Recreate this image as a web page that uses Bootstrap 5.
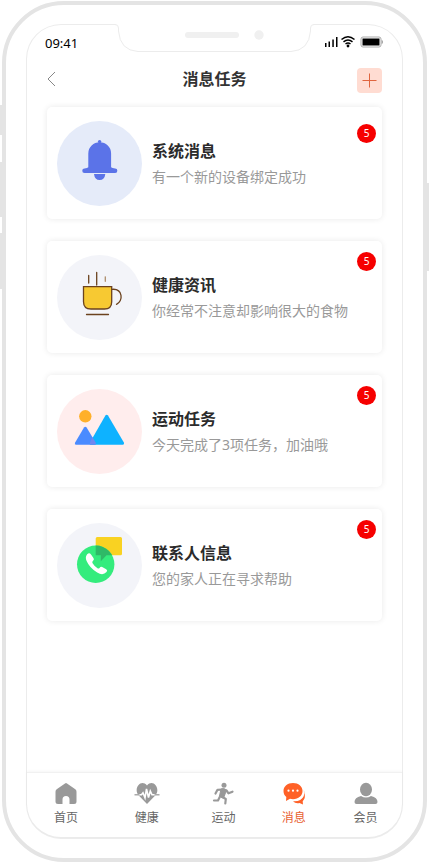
<!DOCTYPE html>
<html lang="zh-CN">
<head>
<meta charset="utf-8">
<meta name="viewport" content="width=device-width, initial-scale=1">
<title>消息任务</title>
<link href="https://cdn.jsdelivr.net/npm/bootstrap@5.3.0/dist/css/bootstrap.min.css" rel="stylesheet">
<style>
  body { font-family: "Noto Sans", "Noto Sans CJK SC", sans-serif; background: #fff; color: #333; }
  svg { display: block; }
  .device { margin: 1px 2px 0; padding: 19px 20px; min-height: calc(100vh - 1px); border: 4px solid #e4e4e4; border-radius: 62px; }
  .side-key { position: absolute; width: 2px; left: -6px; background: #e4e4e4; }
  .key-mute { top: 100px; height: 30px; }
  .key-up { top: 157px; height: 55px; }
  .key-down { top: 228px; height: 56px; }
  .key-power { left: auto; right: -6px; top: 178px; height: 88px; }
  .screen { border: 1px solid #ececec; border-bottom-width: 2px; border-radius: 35px; }
  .notch { position: absolute; top: -2px; left: 50%; margin-left: -100px; }
  .status { padding: 7px 18px 0 18px; height: 36px; font-size: 13px; line-height: 22px; color: #000; }
  .topbar { padding: 7px 20px 14px; }
  .topbar h1 { font-size: 16px; line-height: 22px; padding-bottom: 3px; }
  .back { width: 25px; height: 25px; }
  .add { width: 25px; height: 25px; border-radius: 4px; background: #ffdcd2; }
  .messages { padding: 0 20px; gap: 22px; }
  .message { min-height: 112px; padding: 13px 10px; gap: 10px; border-radius: 5px; background: #fff; box-shadow: 0 0 6px rgba(0,0,0,.09); }
  .message h2 { font-size: 16px; line-height: 25px; color: #2b2b2b; }
  .message p { font-size: 14px; line-height: 25px; color: #999; }
  .message div { padding-top: 2px; }
  .count { position: absolute; top: 11px; right: 6px; width: 19px; height: 19px; font-size: 10px; line-height: 19px; background: #f60000; }
  .count-system { top: 17px; }
  .tabs { display: grid; grid-template-columns: 78fr 84fr 70fr 71fr 73fr; padding: 9px 0; border-top: 1px solid #f1f1f1; box-shadow: 0 -1px 3px rgba(0,0,0,.04); border-radius: 0 0 34px 34px; }
  .tabs a { font-size: 12px; line-height: 20px; color: #666; gap: 3px; }
  .tabs svg { fill: #999; }
  .tabs a.active { color: #e8602f; }
  .tabs .active svg { fill: #ff6127; }
</style>
<script src="https://cdn.jsdelivr.net/npm/bootstrap@5.3.0/dist/js/bootstrap.bundle.min.js"></script>
</head>
<body>
<div class="device position-relative d-flex flex-column">
  <span class="side-key key-mute"></span><span class="side-key key-up"></span><span class="side-key key-down"></span><span class="side-key key-power"></span>
  <div class="screen position-relative d-flex flex-column flex-grow-1">
    <svg class="notch" width="200" height="31" viewBox="0 0 200 31" aria-hidden="true">
      <path d="M0 0H199V1.500Q195.500 1.500 195.500 5V8Q194 28.500 176 28.500H23Q3 26 3 8V5Q3 1.500 0 1.500Z" fill="#fff"/>
      <path d="M0 1.500Q3.500 1.500 3.500 5V8Q5 27.500 23 28.500H176Q194 27.500 195.500 8V5Q195.500 1.500 199 1.500" fill="none" stroke="#ececec"/>
      <rect x="70" y="9" width="54" height="6" rx="3" fill="#f0f0f0"/><circle cx="144" cy="12" r="4.700" fill="#f0f0f0"/>
    </svg>
    <div class="status d-flex justify-content-between">
      <span>09:41</span>
      <svg width="60" height="20" viewBox="0 0 60 20" aria-label="信号 无线网络 电池">
        <path d="M1 11h1.500v4H1zM4.500 9.500H6V15H4.500zM8.300 7.500h1.500V15H8.300zM12 5h1.500v10H12z"/>
        <g fill="none" stroke="#000" stroke-width="1.500"><path d="M17.500 7.500Q24 2 30.500 7.500M19.500 9.800Q24 6.200 28.500 9.800M21.500 12Q24 10 26.500 12"/></g>
        <circle cx="24" cy="14" r="1.400"/>
        <rect x="37" y="5" width="20" height="10" rx="2" fill="#fff" stroke="#aaa"/><rect x="38.500" y="6.500" width="17" height="7"/><path d="M58 8.500q1.500 1.500 0 3z" fill="#aaa" stroke="#aaa"/>
      </svg>
    </div>
    <header class="topbar d-flex align-items-center justify-content-between">
      <button type="button" class="back btn p-0 border-0" aria-label="返回"><svg width="9" height="20" viewBox="0 0 9 20"><path d="M8 1L1 8l7 7" fill="none" stroke="#888"/></svg></button>
      <h1 class="fw-bold mb-0">消息任务</h1>
      <button type="button" class="add btn p-0 border-0" aria-label="添加"><svg width="25" height="25" viewBox="0 0 25 25"><path d="M12.500 5.500v14M5.500 12.500h14" stroke="#e0653f"/></svg></button>
    </header>
    <main class="messages d-flex flex-column flex-grow-1">
      <article class="message position-relative d-flex align-items-center">
        <svg class="flex-shrink-0" width="85" height="85" viewBox="0 0 85 85" aria-hidden="true"><circle cx="42.500" cy="42.500" r="42.500" fill="#e5ebf9"/><g fill="#5b73e8"><circle cx="42.600" cy="20.600" r="1.700"/><path d="M31.300 32.500a11.400 11.200 0 0 1 22.800 0V46.300q1 1 4 1.200a2.250 2.250 0 0 1 0 4.500H27.500a2.250 2.250 0 0 1 0-4.500q3-.2 3.800-1.200zM37 53h11.300q-.7 6-5.650 6T37 53"/></g></svg>
        <div><h2 class="fw-bold m-0">系统消息</h2><p class="m-0">有一个新的设备绑定成功</p></div>
        <span class="count count-system rounded-circle text-white text-center">5</span>
      </article>
      <article class="message position-relative d-flex align-items-center">
        <svg class="flex-shrink-0" width="85" height="85" viewBox="0 0 85 85" aria-hidden="true"><circle cx="42.500" cy="42.500" r="42.500" fill="#f3f4f9"/><g fill="none" stroke="#6b421f" stroke-width="1.300" stroke-linecap="round"><path d="M26.500 31.700h28.200v15q0 7.300-7.300 7.300H34q-7.500 0-7.500-7.300z" fill="#f7c932"/><path d="M55 34.300c11-1 11.500 12 4.500 15M31.700 20.500V28M39.700 17.500V30M29.500 59.500h22"/><path d="M48.300 21.800v4.500" stroke="#ad8d6b"/></g></svg>
        <div><h2 class="fw-bold m-0">健康资讯</h2><p class="m-0">你经常不注意却影响很大的食物</p></div>
        <span class="count rounded-circle text-white text-center">5</span>
      </article>
      <article class="message position-relative d-flex align-items-center">
        <svg class="flex-shrink-0" width="85" height="85" viewBox="0 0 85 85" aria-hidden="true"><circle cx="42.500" cy="42.500" r="42.500" fill="#ffeded"/><circle cx="28.300" cy="27.300" r="6.200" fill="#ffb02a"/><path d="M27 38.500q1.300-1.500 2.600 0l9.200 15.300q.6 1.900-1.200 1.900H19q-1.800 0-1-2z" fill="#4a8bff"/><path d="M48.400 26.500q1.300-1.500 2.600 0l16 27.300q.5 1.900-1.300 1.900H34q-1.800 0-1.200-2z" fill="#0eb2ff"/><path d="M35.300 48l3.500 5.800q.6 1.900-1.200 1.900H34q-1.800 0-1.200-2z" fill="#7186f0"/></svg>
        <div><h2 class="fw-bold m-0">运动任务</h2><p class="m-0">今天完成了3项任务，加油哦</p></div>
        <span class="count rounded-circle text-white text-center">5</span>
      </article>
      <article class="message position-relative d-flex align-items-center">
        <svg class="flex-shrink-0" width="85" height="85" viewBox="0 0 85 85" aria-hidden="true"><defs><clipPath id="dial"><circle cx="38.700" cy="41.300" r="18.700"/></clipPath></defs><circle cx="42.500" cy="42.500" r="42.500" fill="#f3f4f9"/><path d="M40.200 14H63.500q1.500 0 1.500 1.500v15.300q0 1.500-1.500 1.500H49.500l-5.700 6v-6h-3.600q-1.500 0-1.500-1.500V15.500q0-1.500 1.500-1.500" fill="#f9d222"/><circle cx="38.700" cy="41.300" r="18.700" fill="#34ec7d"/><path d="M38.700 14H65v18.300H49.500l-5.700 6v-6h-5.100z" fill="#2fb967" clip-path="url(#dial)"/><path d="M30 31.500q2.200-2.500 4 0l2.600 3.700q.8 1.500-.6 2.600-1.300 1-.4 2.500 2.200 3.500 4.900 5 1.200.7 2.200-.6 1-1.300 2.500-.6l4 2.200q1.800 1.100.3 2.700-3.500 4-9.300.6-7.400-4.300-10.600-11.500-1.700-4 .4-6.600" fill="#fff"/></svg>
        <div><h2 class="fw-bold m-0">联系人信息</h2><p class="m-0">您的家人正在寻求帮助</p></div>
        <span class="count rounded-circle text-white text-center">5</span>
      </article>
    </main>
    <nav class="tabs">
      <a href="#" class="d-flex flex-column align-items-center text-decoration-none"><svg width="26" height="23" viewBox="0 0 26 23"><path d="M12 1.500q1-.8 2 0l8.300 5.800q1.200.9 1.200 2.500V19.500q0 2.500-2.500 2.500h-4.500v-4.500a3.500 3.500 0 0 0-7 0V22H5q-2.500 0-2.500-2.500V9.800q0-1.600 1.200-2.500z"/></svg>首页</a>
      <a href="#" class="d-flex flex-column align-items-center text-decoration-none"><svg width="26" height="23" viewBox="0 0 26 23"><path d="M13 22L4.500 13.200C-1 6.500 7-3.500 13 3.500 19-3.500 27 6.500 21.500 13.200z"/><path d="M.5 12.800h7l1.500-2 2 5L12.500 7l2 8.500L16.300 9l1.700 3.800h7.500" fill="none" stroke="#fff" stroke-width="1.600"/><path d="M.5 12.800h5M20.500 12.800h5" stroke="#aaa" stroke-width="1.500"/></svg>健康</a>
      <a href="#" class="d-flex flex-column align-items-center text-decoration-none"><svg width="26" height="23" viewBox="0 0 26 23"><circle cx="14" cy="3.300" r="2.500"/><path d="M5.500 11.500L7.500 7.800 12.500 7.500M16.500 8.500l2 2.800 4-1.600M11.500 14.500l4.300 2.500-.5 4.500M10 14.500L8 18.500H4" fill="none" stroke="#999" stroke-width="2.200" stroke-linecap="round" stroke-linejoin="round"/><path d="M11 7q3-1.500 5.500 1l-2.300 6.500-1.500 1.500-3.200-2z" stroke="#999" stroke-linejoin="round"/></svg>运动</a>
      <a href="#" class="active d-flex flex-column align-items-center text-decoration-none" aria-current="page"><svg width="26" height="23" viewBox="0 0 26 23"><path d="M12 1C6.500 1 2.500 4.300 2.500 9c0 2.500 1 4.500 2.800 6L5 19l4-2.200q1.500.4 3 .4c5.500 0 9.500-3.500 9.500-8.200S17.500 1 12 1"/><path d="M22.700 8q2 6.500-3.500 10-3 1.700-7.200 1.200 2.500 2.600 6.500 1.700l3.500 1.600-.3-3.300q3-3 1.900-7.200-.3-2.300-.9-4"/><g fill="#fff"><circle cx="7.500" cy="8.700" r="1.100"/><circle cx="12" cy="8.700" r="1.100"/><circle cx="16.500" cy="8.700" r="1.100"/></g></svg>消息</a>
      <a href="#" class="d-flex flex-column align-items-center text-decoration-none"><svg width="26" height="23" viewBox="0 0 26 23"><ellipse cx="13" cy="7.500" rx="6" ry="6.800"/><path d="M8 14q5 3 10 0 6.500 1.500 6.500 6 0 2-2 2h-19q-2 0-2-2 0-4.500 6.500-6"/></svg>会员</a>
    </nav>
  </div>
</div>
</body>
</html>
